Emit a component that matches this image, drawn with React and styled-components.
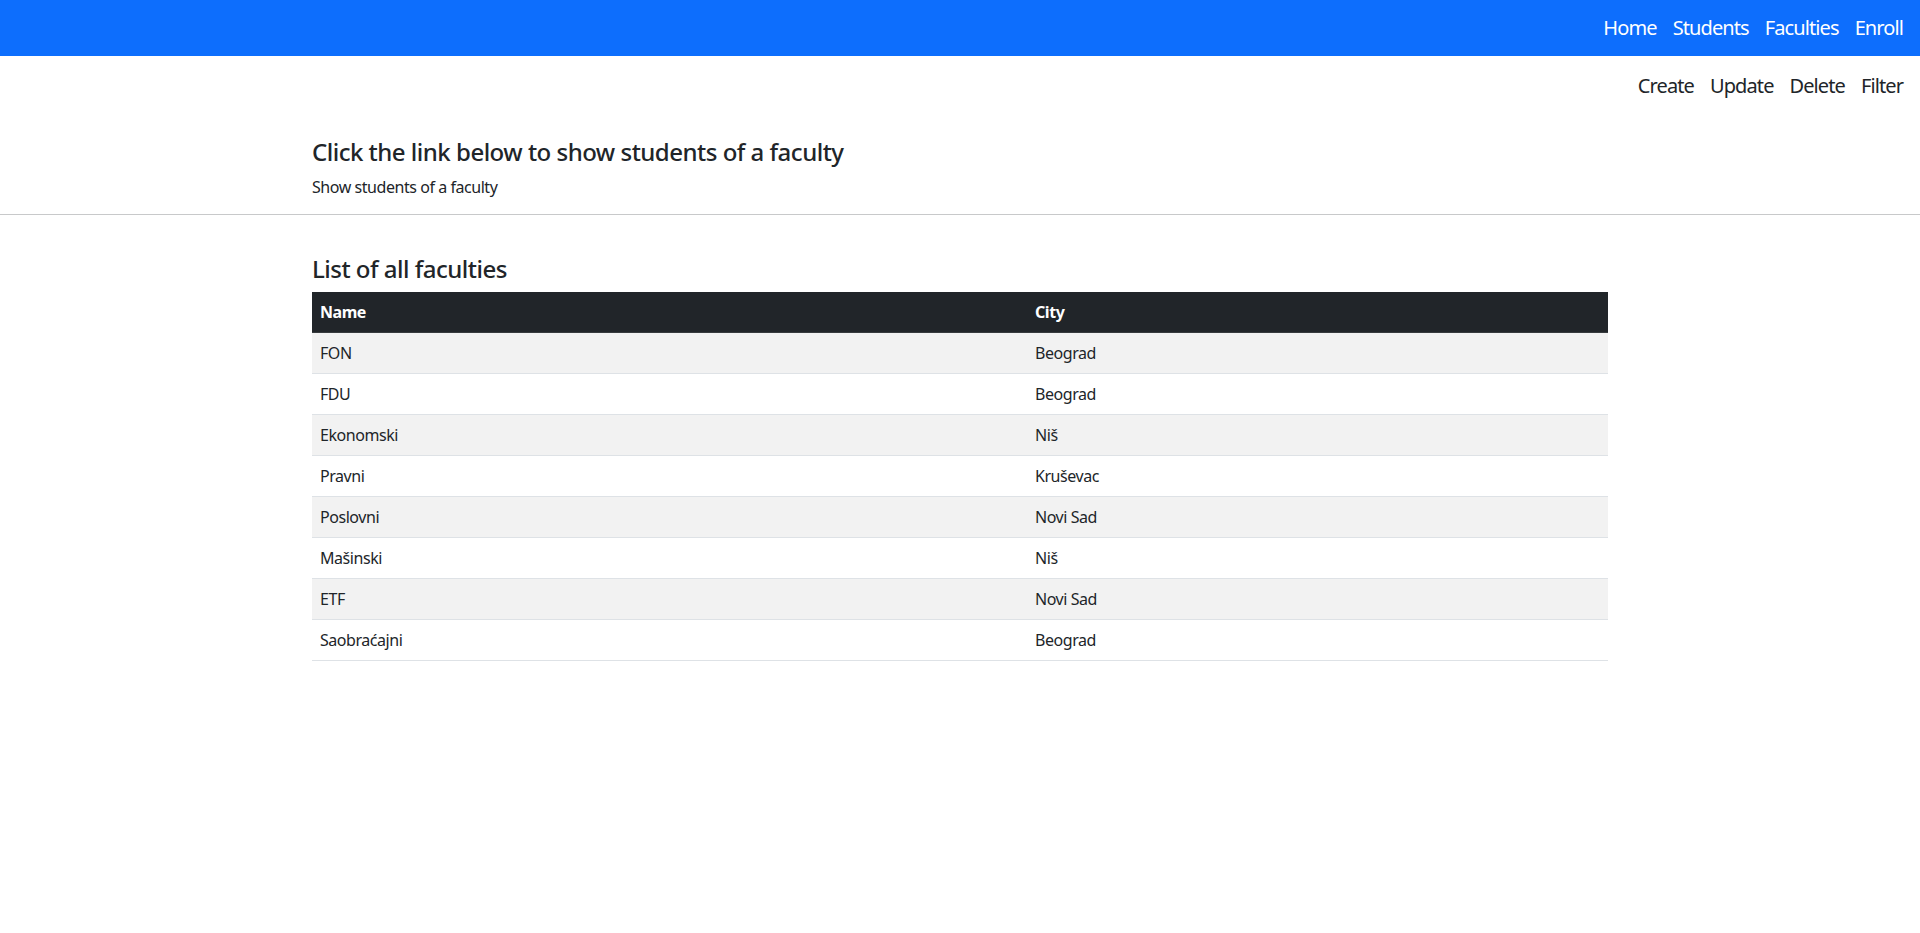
import React from 'react';
import styled, {createGlobalStyle} from 'styled-components';

const GlobalStyle = createGlobalStyle`
  *, *::before, *::after { box-sizing: border-box; }
  body {
    margin: 0;
    font-family: "Segoe UI", "Noto Sans", "Open Sans", sans-serif;
    font-size: 16px;
    line-height: 1.5;
    letter-spacing: -0.028em;
    color: #212529;
    background: #fff;
  }
`;

const Navbar = styled.nav`
  height: 56px;
  background: #0d6efd;
  display: flex;
  justify-content: flex-end;
  align-items: center;
  padding: 0 9px;
`;

const NavLink = styled.a`
  color: ${(p) => (p.dark ? '#212529' : '#fff')};
  font-size: 20px;
  line-height: 30px;
  letter-spacing: -0.045em;
  padding: 8px 8px;
  text-decoration: none;
  cursor: pointer;
`;

const SubNav = styled.div`
  display: flex;
  justify-content: flex-end;
  padding: 7px 9px 0;
`;

const Container = styled.div`
  max-width: 1320px;
  margin: 0 auto;
  padding: 0 12px;
`;

const Heading = styled.h4`
  font-size: 24px;
  font-weight: 500;
  line-height: 1.2;
  letter-spacing: -0.021em;
  margin: ${(p) => p.top}px 0 8px;
`;

const Text = styled.p`
  margin: 0;
`;

const Divider = styled.hr`
  border: 0;
  border-top: 1px solid #c8c9ca;
  margin: 15px 0 0;
`;

const Table = styled.table`
  width: 100%;
  border-collapse: collapse;
  margin-bottom: 16px;
`;

const HeadCell = styled.th`
  background: #212529;
  color: #fff;
  text-align: left;
  font-weight: 700;
  padding: 8px;
  border-bottom: 1px solid #373b3e;
  width: ${(p) => p.w || 'auto'};
`;

const Row = styled.tr`
  background: ${(p) => (p.striped ? '#f2f2f2' : '#fff')};
`;

const Cell = styled.td`
  padding: 8px;
  border-bottom: 1px solid #dee2e6;
`;

const faculties = [
  ['FON', 'Beograd'],
  ['FDU', 'Beograd'],
  ['Ekonomski', 'Niš'],
  ['Pravni', 'Kruševac'],
  ['Poslovni', 'Novi Sad'],
  ['Mašinski', 'Niš'],
  ['ETF', 'Novi Sad'],
  ['Saobraćajni', 'Beograd'],
];

const App = () => {
  return (
    <>
      <GlobalStyle />
      <Navbar>
        <NavLink>Home</NavLink>
        <NavLink>Students</NavLink>
        <NavLink>Faculties</NavLink>
        <NavLink>Enroll</NavLink>
      </Navbar>
      <SubNav>
        <NavLink dark>Create</NavLink>
        <NavLink dark>Update</NavLink>
        <NavLink dark>Delete</NavLink>
        <NavLink dark>Filter</NavLink>
      </SubNav>
      <Container>
        <Heading top={29}>Click the link below to show students of a faculty</Heading>
        <Text>Show students of a faculty</Text>
      </Container>
      <Divider />
      <Container>
        <Heading top={40}>List of all faculties</Heading>
        <Table>
          <thead>
            <tr>
              <HeadCell w="715px">Name</HeadCell>
              <HeadCell>City</HeadCell>
            </tr>
          </thead>
          <tbody>
            {faculties.map(([name, city], i) => (
              <Row key={name} striped={i % 2 === 0}>
                <Cell>{name}</Cell>
                <Cell>{city}</Cell>
              </Row>
            ))}
          </tbody>
        </Table>
      </Container>
    </>
  );
};

export default App;
